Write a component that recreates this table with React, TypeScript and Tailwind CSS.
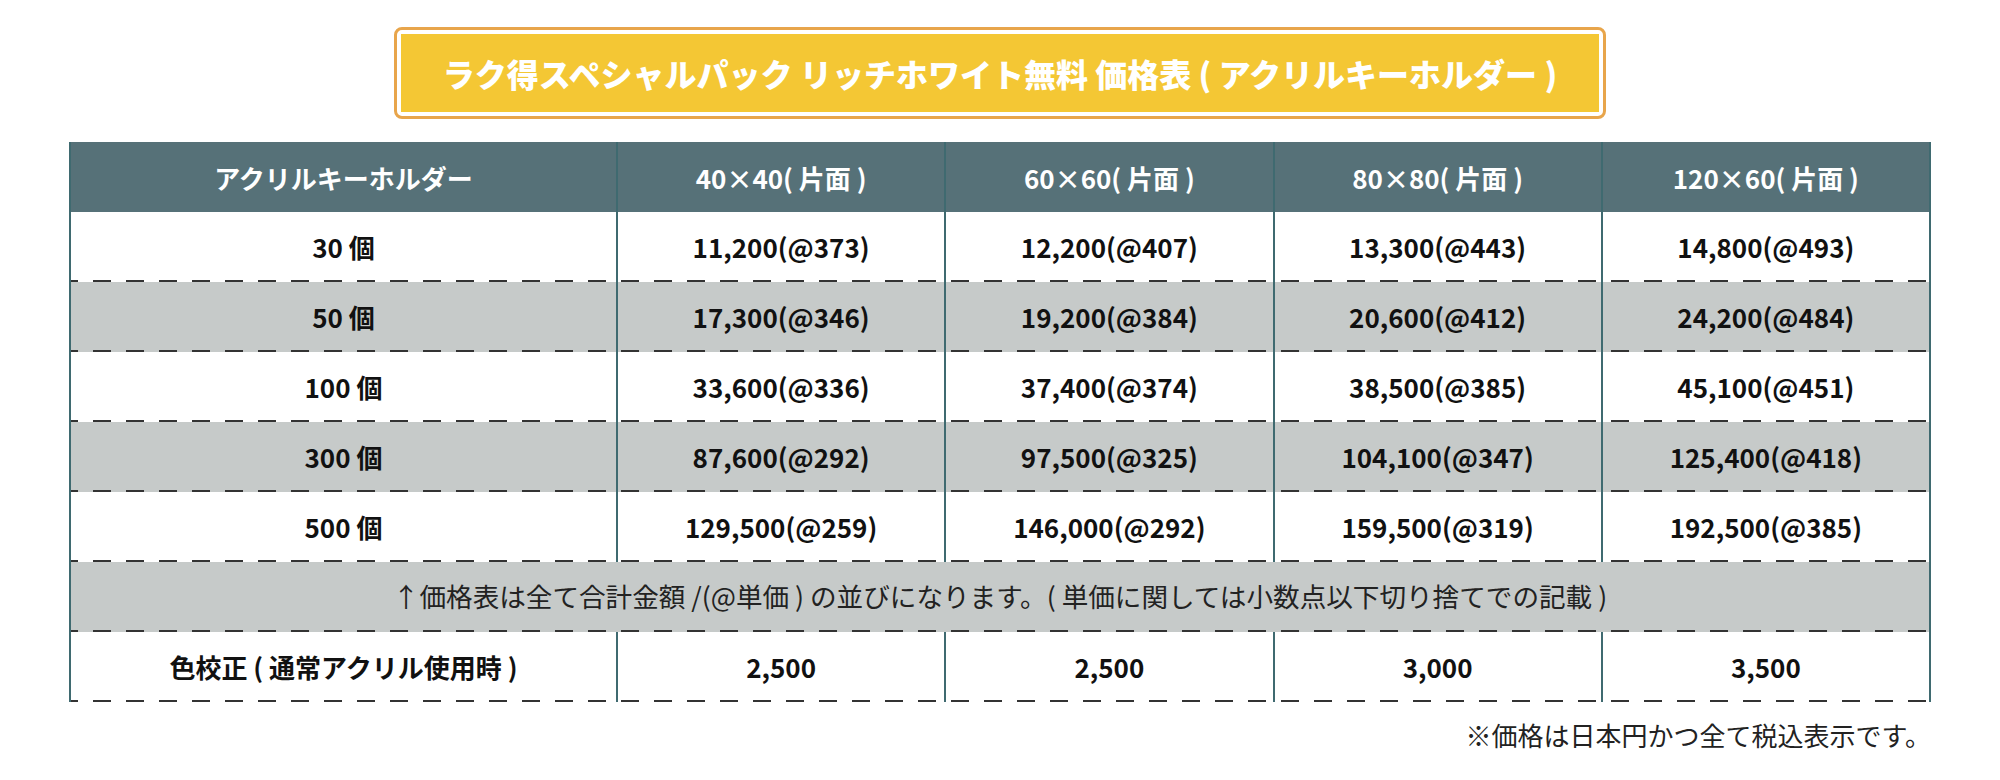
const headers = ["アクリルキーホルダー", "40×40( 片面 )", "60×60( 片面 )", "80×80( 片面 )", "120×60( 片面 )"];

const rows = [
  ["30 個", "11,200(@373)", "12,200(@407)", "13,300(@443)", "14,800(@493)"],
  ["50 個", "17,300(@346)", "19,200(@384)", "20,600(@412)", "24,200(@484)"],
  ["100 個", "33,600(@336)", "37,400(@374)", "38,500(@385)", "45,100(@451)"],
  ["300 個", "87,600(@292)", "97,500(@325)", "104,100(@347)", "125,400(@418)"],
  ["500 個", "129,500(@259)", "146,000(@292)", "159,500(@319)", "192,500(@385)"],
];

const colorProof = ["色校正 ( 通常アクリル使用時 )", "2,500", "2,500", "3,000", "3,500"];

const dashed =
  "bg-[linear-gradient(to_right,#333333_18px,transparent_18px)] bg-[length:33px_2px] bg-[position:-11px_100%] bg-repeat-x";

function Row({ cells, grey }: { cells: string[]; grey?: boolean }) {
  return (
    <div
      className={`grid h-[70px] grid-cols-[545px_repeat(4,minmax(0,1fr))] ${dashed} ${
        grey ? "bg-[#c6cac9]" : "bg-white"
      }`}
    >
      {cells.map((c, i) => (
        <div
          key={i}
          className={`flex items-center justify-center pb-[2px] text-[26px] font-bold text-[#111111] ${
            i > 0 ? "border-l-2 border-[#3f6a70]" : ""
          }`}
        >
          {c}
        </div>
      ))}
    </div>
  );
}

export default function App() {
  return (
    <main className="flex min-h-screen flex-col items-center bg-white pt-[27px] font-['Noto_Sans_CJK_JP',sans-serif]">
      {/* TITLE */}
      <div className="h-[92px] w-[1212px] rounded-[8px] border-[3px] border-[#e8a54b] bg-white p-[4px]">
        <div className="flex h-full items-center justify-center bg-[#f4c734] text-[32px] font-black text-white">
          ラク得スペシャルパック リッチホワイト無料 価格表 ( アクリルキーホルダー )
        </div>
      </div>

      {/* TABLE */}
      <div className="mt-[23px] w-[1862px] border-x-2 border-[#3f6a70]">
        <div className="grid h-[70px] grid-cols-[545px_repeat(4,minmax(0,1fr))] bg-[#567178]">
          {headers.map((h, i) => (
            <div
              key={h}
              className={`flex items-center justify-center text-[26px] font-bold text-white ${
                i > 0 ? "border-l-2 border-[#3f6a70]" : ""
              }`}
            >
              {h}
            </div>
          ))}
        </div>

        {rows.map((r, i) => (
          <Row key={r[0]} cells={r} grey={i % 2 === 1} />
        ))}

        <div
          className={`flex h-[70px] items-center justify-center bg-[#c6cac9] pb-[2px] text-[26.6px] text-[#222222] ${dashed}`}
        >
          ↑価格表は全て合計金額 /(@単価 ) の並びになります。( 単価に関しては小数点以下切り捨てでの記載 )
        </div>

        <Row cells={colorProof} />
      </div>

      <div className="mt-[17px] w-[1862px] text-right text-[26px] leading-[32px] text-[#222222]">
        ※価格は日本円かつ全て税込表示です。
      </div>
    </main>
  );
}
